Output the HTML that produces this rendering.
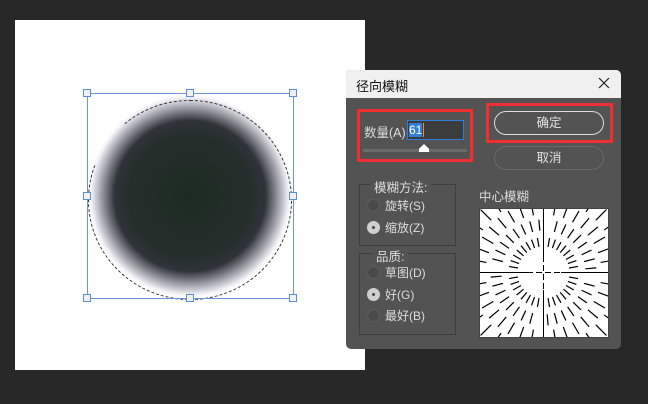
<!DOCTYPE html>
<html><head><meta charset="utf-8"><style>
*{margin:0;padding:0;box-sizing:border-box}
body{width:648px;height:404px;background:#282828;position:relative;overflow:hidden;font-family:"Liberation Sans","Noto Sans CJK SC",sans-serif;color:#e0e0e0;font-size:12px}
.a{position:absolute}
.canvas{left:15px;top:20px;width:350px;height:350px;background:#fff}
.h{width:8px;height:8px;border:1px solid #5b8fd6;background:#f0f0f0;position:absolute}
.dlg{left:346px;top:70px;width:275px;height:279px;background:#535353;border-radius:5px;overflow:hidden}
.tb{left:0;top:0;width:275px;height:28px;background:#f0f0f0;color:#111;font-size:13px}
.red{border:3px solid #f03030}
.btn{border:1px solid #7a7a7a;border-radius:12px;text-align:center;font-size:12.5px}
.grp{border:1px solid #3e3e3e}
.rad{width:13px;height:13px;border-radius:50%;background:#4a4a4a;border:1px solid #5e5e5e}
.rad.on{background:#cfcfcf;border-color:#cfcfcf}
.rad.on:after{content:"";position:absolute;left:4px;top:4px;width:3px;height:3px;background:#444;border-radius:50%}
.lb{font-size:12px;color:#ddd}
</style></head><body>
<div class="a canvas"></div>
<div class="a" style="left:88px;top:94px;width:204px;height:204px;border-radius:50%;background:radial-gradient(circle closest-side,#1c2a22 0%,#262e2c 60%,#30343a 74%,#7c7c86 83%,#c8c8d0 92%,#f4f4f8 97%,rgba(255,255,255,0) 100%)"></div>
<div class="a" style="left:88px;top:100px;width:204px;height:200px;border-radius:50%;border:1px dashed #333;clip-path:polygon(0 0,18% 0,18% 20%,0 35%,0 100%,100% 100%,100% 0,60% 0,60% 0)"></div>
<div class="a" style="left:87px;top:93px;width:207px;height:206px;border:1px solid #6a96d8"></div>
<div class="h" style="left:83px;top:89px"></div><div class="h" style="left:186px;top:89px"></div><div class="h" style="left:289px;top:89px"></div>
<div class="h" style="left:83px;top:192px"></div><div class="h" style="left:289px;top:192px"></div>
<div class="h" style="left:83px;top:294px"></div><div class="h" style="left:186px;top:294px"></div><div class="h" style="left:289px;top:294px"></div>

<div class="a dlg">
 <div class="a tb"><span class="a" style="left:10px;top:6px">径向模糊</span>
 <svg class="a" style="left:252px;top:7px" width="12" height="12"><path d="M1 1L11 11M11 1L1 11" stroke="#222" stroke-width="1.2"/></svg></div>
 <div class="a red" style="left:11px;top:39px;width:116px;height:53px"></div>
 <div class="a lb" style="left:18px;top:52px;font-size:12.5px">数量(A)</div>
 <div class="a" style="left:61px;top:50px;width:57px;height:20px;background:#3c3c3c;border:1px solid #2f7fd8"></div>
 <div class="a" style="left:63px;top:53px;width:13px;height:14px;background:#2f7fd8;color:#fff;font-size:12px;line-height:14px">61</div>
 <div class="a" style="left:77px;top:53px;width:1px;height:14px;background:#f0902e"></div>
 <div class="a" style="left:17px;top:79px;width:104px;height:3px;background:#6a6a6a"></div>
 <div class="a" style="left:73px;top:74px;width:10px;height:8px;background:#fff;clip-path:polygon(50% 0,100% 60%,100% 100%,0 100%,0 60%)"></div>
 <div class="a red" style="left:140px;top:33px;width:127px;height:40px"></div>
 <div class="a btn" style="left:148px;top:41px;width:110px;height:24px;line-height:22px;border-color:#ddd">确定</div>
 <div class="a btn" style="left:148px;top:76px;width:110px;height:24px;line-height:22px;border-color:#6a6a6a">取消</div>
 <div class="a grp" style="left:13px;top:114px;width:97px;height:62px"></div>
 <div class="a lb" style="left:24px;top:107px;background:#535353;padding:0 4px;font-size:12.5px">模糊方法:</div>
 <div class="a rad" style="left:21px;top:129px"></div><div class="a lb" style="left:39px;top:127px">旋转(S)</div>
 <div class="a rad on" style="left:21px;top:151px"></div><div class="a lb" style="left:39px;top:149px">缩放(Z)</div>
 <div class="a grp" style="left:13px;top:183px;width:97px;height:82px"></div>
 <div class="a lb" style="left:26px;top:176px;background:#535353;padding:0 4px;font-size:12.5px">品质:</div>
 <div class="a rad" style="left:21px;top:196px"></div><div class="a lb" style="left:39px;top:194px">草图(D)</div>
 <div class="a rad on" style="left:21px;top:218px"></div><div class="a lb" style="left:39px;top:216px">好(G)</div>
 <div class="a rad" style="left:21px;top:239px"></div><div class="a lb" style="left:39px;top:237px">最好(B)</div>
 <div class="a lb" style="left:133px;top:116px;font-size:12.5px">中心模糊</div>
 <svg class="a" id="pv" style="left:133px;top:138px" width="130" height="130" viewBox="0 0 130 130"></svg>
</div>
<script>
var s=document.getElementById('pv'),c=64.5,h='<rect width="130" height="130" fill="#fff"/>';
h+='<line x1="64.5" y1="0" x2="64.5" y2="48" stroke="#000"/><line x1="64.5" y1="82" x2="64.5" y2="130" stroke="#000"/><line x1="0" y1="64.5" x2="48" y2="64.5" stroke="#000"/><line x1="82" y1="64.5" x2="130" y2="64.5" stroke="#000"/>';
h+='<line x1="48" y1="64.5" x2="82" y2="64.5" stroke="#000" stroke-dasharray="6,3"/><line x1="64.5" y1="48" x2="64.5" y2="82" stroke="#000" stroke-dasharray="6,3"/>';
[[26,9],[42,11],[58,13],[74,15],[90,17]].forEach(function(r,i){for(var a=0;a<360;a+=10){if(a%90==0)continue;var t=(a+(i%2)*5)*Math.PI/180,x1=c+r[0]*Math.cos(t),y1=c+r[0]*Math.sin(t),x2=c+(r[0]+r[1])*Math.cos(t),y2=c+(r[0]+r[1])*Math.sin(t);h+='<line x1="'+x1+'" y1="'+y1+'" x2="'+x2+'" y2="'+y2+'" stroke="#000" stroke-width="1.2"/>';}});
h+='<rect x="0.5" y="0.5" width="129" height="129" fill="none" stroke="#444"/>';
s.innerHTML=h;
</script>
</body></html>
